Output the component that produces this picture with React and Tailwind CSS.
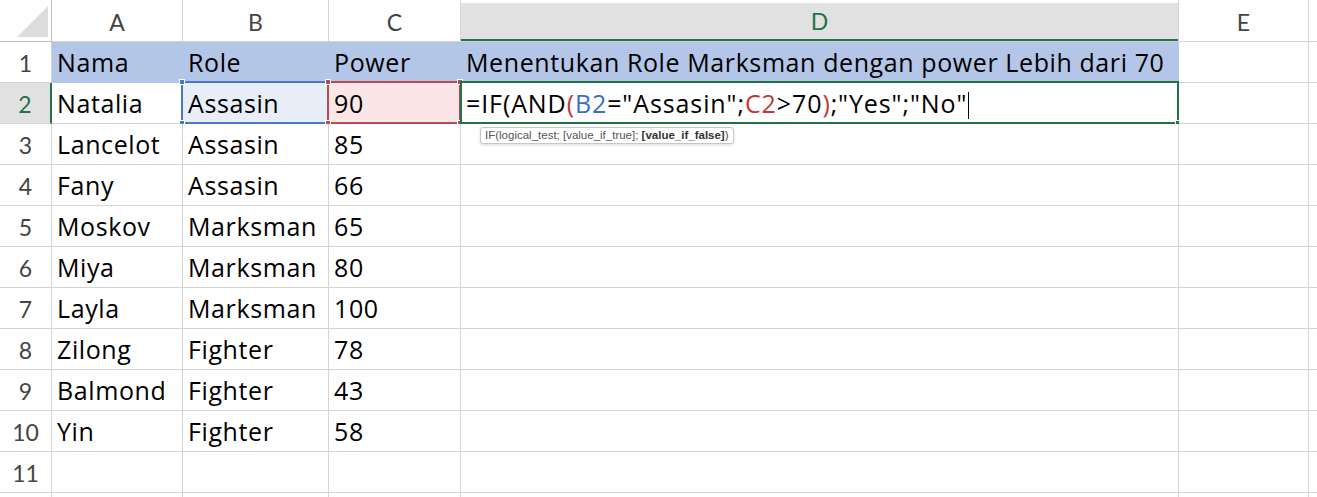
const rows = [
  ["Nama", "Role", "Power", "Menentukan Role Marksman dengan power Lebih dari 70"],
  ["Natalia", "Assasin", "90", ""],
  ["Lancelot", "Assasin", "85", ""],
  ["Fany", "Assasin", "66", ""],
  ["Moskov", "Marksman", "65", ""],
  ["Miya", "Marksman", "80", ""],
  ["Layla", "Marksman", "100", ""],
  ["Zilong", "Fighter", "78", ""],
  ["Balmond", "Fighter", "43", ""],
  ["Yin", "Fighter", "58", ""],
  ["", "", "", ""],
  ["", "", "", ""],
];

const colW = ["w-[131px]", "w-[146px]", "w-[132px]", "w-[718px]", "w-[130px]"];
const letters = ["A", "B", "C", "D", "E"];

const cellFont = { fontFamily: "'Open Sans', Lato, sans-serif" };
const headFont = { fontFamily: "Lato, 'Open Sans', sans-serif" };

const Corner = () => (
  <div className="w-[52px] h-[42px] shrink-0 border-r border-b border-[#bfbfbf] bg-white relative">
    <svg width="52" height="42" className="absolute inset-0">
      <polygon points="17,37 48,37 48,6" fill="#dcdcdc" />
    </svg>
  </div>
);

const ColHead = ({ i }) => {
  const active = letters[i] === "D";
  return (
    <div
      className={`${colW[i]} h-[42px] shrink-0 border-r border-b border-[#d4d4d4] bg-white pt-[3px]`}
    >
      <div
        className={`h-full flex items-center justify-center text-[23px] ${
          active ? "bg-[#e1e1e1] text-[#217346] border-b-2 border-[#217346]" : "text-[#444]"
        }`}
        style={headFont}
      >
        {letters[i]}
      </div>
    </div>
  );
};

const Formula = () => (
  <span className="tracking-[0.9px]">
    =IF(AND<span className="text-[#c0393b]">(</span>
    <span className="text-[#3b6fc4]">B2</span>="Assasin";
    <span className="text-[#c0393b]">C2</span>&gt;70
    <span className="text-[#c0393b]">)</span>;"Yes";"No"
    <span className="inline-block w-px h-[27px] bg-black align-middle ml-[1px] -mt-[2px]" />
  </span>
);

const Handle = ({ pos, color }) => (
  <div className={`absolute w-[6px] h-[6px] ${pos} ${color} border border-white`} />
);

const Cell = ({ r, c, text }) => {
  const header = r === 0 && c < 4;
  let cls = "border-[#d4d4d4] bg-white";
  if (header) cls = "border-[#b4c6e7] bg-[#b4c6e7]";
  if (r === 1 && c === 1) cls = "border-[#d4d4d4] bg-[#e8eef8]";
  if (r === 1 && c === 2) cls = "border-[#d4d4d4] bg-[#fbe5e6]";
  return (
    <div
      className={`${colW[c]} h-[41px] shrink-0 border-r border-b ${cls} relative flex items-center pl-[5px] pt-[2px] text-[25px] tracking-[0.6px] text-black whitespace-nowrap`}
      style={cellFont}
    >
      {r === 1 && c === 3 ? <Formula /> : text}
      {r === 1 && c === 1 && (
        <div className="absolute -left-[2px] -top-[2px] -right-[1px] -bottom-[1px] border-2 border-[#4b78c6]">
          <Handle pos="-left-[4px] -top-[4px]" color="bg-[#4b78c6]" />
          <Handle pos="-right-[4px] -top-[4px]" color="bg-[#4b78c6]" />
          <Handle pos="-left-[4px] -bottom-[4px]" color="bg-[#4b78c6]" />
        </div>
      )}
      {r === 1 && c === 2 && (
        <div className="absolute -left-[2px] -top-[2px] -right-[1px] -bottom-[1px] border-2 border-[#b94a52]">
          <Handle pos="-left-[4px] -top-[4px]" color="bg-[#b94a52]" />
          <Handle pos="-right-[4px] -top-[4px]" color="bg-[#b94a52]" />
          <Handle pos="-left-[4px] -bottom-[4px]" color="bg-[#b94a52]" />
          <Handle pos="-right-[4px] -bottom-[4px]" color="bg-[#b94a52]" />
        </div>
      )}
      {r === 1 && c === 3 && (
        <>
          <div className="absolute -left-[1px] -top-[2px] -right-[1px] -bottom-[1px] border-2 border-[#217346]">
            <div className="absolute -right-[4px] -bottom-[4px] w-[6px] h-[6px] bg-[#217346] border border-white" />
          </div>
          <div
            className="absolute left-[19px] top-[44px] h-[17px] px-[4px] flex items-center bg-white border border-[#c8c8c8] rounded-[3px] shadow-[0_1px_3px_rgba(0,0,0,0.15)] text-[11.5px] tracking-normal text-[#555] z-10"
            style={{ fontFamily: "'Liberation Sans', Arial, sans-serif" }}
          >
            IF(logical_test; [value_if_true];&nbsp;<b className="text-[#333]">[value_if_false]</b>)
          </div>
        </>
      )}
    </div>
  );
};

const RowHead = ({ n }) => {
  const active = n === 2;
  return (
    <div
      className={`w-[52px] h-[41px] shrink-0 border-b flex items-center justify-center pt-[2px] text-[23px] ${
        active
          ? "bg-[#e1e1e1] text-[#217346] border-r-2 border-r-[#217346] border-b-[#d4d4d4]"
          : "bg-white text-[#444] border-r border-[#d4d4d4]"
      }`}
      style={headFont}
    >
      {n < 12 ? n : ""}
    </div>
  );
};

export default function App() {
  return (
    <div className="w-[1317px] h-[497px] overflow-hidden bg-white select-none">
      <div className="flex">
        <Corner />
        {letters.map((l, i) => (
          <ColHead key={l} i={i} />
        ))}
        <div className="flex-1 h-[42px] border-b border-[#d4d4d4]" />
      </div>
      {rows.map((row, r) => (
        <div key={r} className="flex">
          <RowHead n={r + 1} />
          {row.map((t, c) => (
            <Cell key={c} r={r} c={c} text={t} />
          ))}
          <Cell r={r} c={4} text="" />
          <div className="flex-1 h-[41px] border-b border-[#d4d4d4]" />
        </div>
      ))}
    </div>
  );
}
